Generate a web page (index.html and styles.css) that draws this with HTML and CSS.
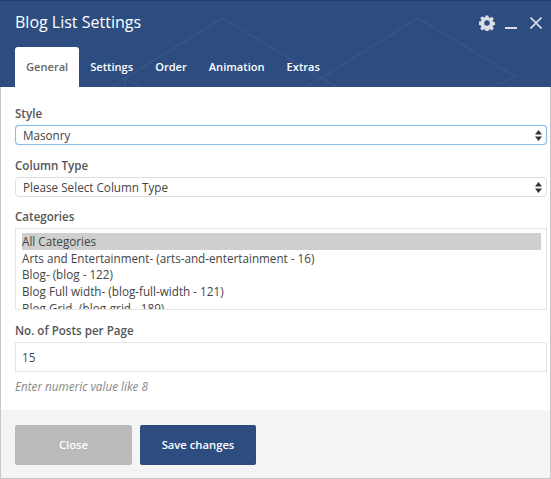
FILE: index.html
```html
<!DOCTYPE html>
<html lang="en">
<head>
<meta charset="utf-8">
<title>Blog List Settings</title>
<link rel="stylesheet" href="styles.css">
</head>
<body>
<div class="modal">
  <header class="head">
    <svg class="pattern" width="551" height="87" viewBox="0 0 551 87" fill="none" stroke="#365689" stroke-width="1.5">
      <path d="M125 78L223 18L321 78M321 78L336 87M125 78L113 87M125 78L140 87M125 78V87"/>
      <path d="M321 78L418 18L516 77L490 87M321 78L305 87"/>
    </svg>
    <div class="title-row">
      <h1 class="title">Blog List Settings</h1>
      <div class="controls">
        <svg class="gear" width="16" height="16" viewBox="0 0 16 16"><path fill="#d8dde6" fill-rule="evenodd" d="M6.6.4h2.8l.4 2.1 1.2.5 1.8-1.2 2 2-1.2 1.8.5 1.2 2.1.4v2.8l-2.1.4-.5 1.2 1.2 1.8-2 2-1.8-1.2-1.2.5-.4 2.1H6.6l-.4-2.1-1.2-.5-1.8 1.2-2-2 1.2-1.8-.5-1.2-2.1-.4V6.6l2.1-.4.5-1.2-1.2-1.8 2-2 1.8 1.2 1.2-.5zM8 5.3a2.7 2.7 0 1 0 0 5.4 2.7 2.7 0 0 0 0-5.4z"/></svg>
        <span class="minimize"></span>
        <svg class="close-x" width="12" height="12" viewBox="0 0 12 12"><path d="M.5.5L11.5 11.5M11.5.5L.5 11.5" stroke="#d8dde6" stroke-width="1.7"/></svg>
      </div>
    </div>
    <nav class="tabs">
      <a class="tab active">General</a>
      <a class="tab">Settings</a>
      <a class="tab">Order</a>
      <a class="tab">Animation</a>
      <a class="tab">Extras</a>
    </nav>
  </header>
  <main class="body">
    <label class="label">Style</label>
    <div class="select focus"><span>Masonry</span><svg class="updown" width="7" height="11" viewBox="0 0 7 11"><path fill="#333" d="M3.5 0L7 4.5H0zM3.5 11L0 6.5h7z"/></svg></div>
    <label class="label second">Column Type</label>
    <div class="select"><span>Please Select Column Type</span><svg class="updown" width="7" height="11" viewBox="0 0 7 11"><path fill="#333" d="M3.5 0L7 4.5H0zM3.5 11L0 6.5h7z"/></svg></div>
    <label class="label third">Categories</label>
    <div class="listbox">
      <div class="option selected">All Categories</div>
      <div class="option">Arts and Entertainment- (arts-and-entertainment - 16)</div>
      <div class="option">Blog- (blog - 122)</div>
      <div class="option">Blog Full width- (blog-full-width - 121)</div>
      <div class="option">Blog Grid- (blog-grid - 189)</div>
    </div>
    <label class="label fourth">No. of Posts per Page</label>
    <div class="input">15</div>
    <p class="help">Enter numeric value like 8</p>
  </main>
  <footer class="foot">
    <button class="btn btn-close">Close</button>
    <button class="btn btn-save">Save changes</button>
  </footer>
</div>
</body>
</html>
```
FILE: styles.css
```css
* { box-sizing: border-box; }
html, body { margin: 0; padding: 0; }
body {
  width: 551px;
  height: 479px;
  overflow: hidden;
  background: #fff;
  font-family: "Open Sans", sans-serif;
  color: #444;
}
.modal {
  width: 551px;
  height: 479px;
  display: flex;
  flex-direction: column;
  border: 1px solid #c8c8c8;
  border-top: 0;
}
.head {
  position: relative;
  margin: 0 -1px;
  height: 87px;
  flex: none;
  background: #2d4d80;
  border-top: 1px solid #223d68;
}
.pattern {
  position: absolute;
  left: 0;
  top: -1px;
}
.title-row {
  position: relative;
  height: 46px;
  display: flex;
  align-items: flex-start;
  justify-content: space-between;
  padding: 0 9px 0 15px;
}
.title {
  margin: 8px 0 0;
  font-size: 16px;
  line-height: 26px;
  font-weight: 400;
  color: #fff;
}
.controls {
  display: flex;
  align-items: flex-start;
  padding-top: 14px;
}
.gear { margin-right: 10px; }
.minimize {
  width: 12px;
  height: 2px;
  margin-top: 12px;
  margin-right: 13px;
  background: #d8dde6;
}
.close-x { margin-top: 2px; }
.tabs {
  position: relative;
  display: flex;
  padding-left: 15px;
  height: 40px;
}
.tab {
  height: 40px;
  padding: 0 11px;
  font-size: 11.1px;
  font-weight: 600;
  line-height: 39px;
  color: #fff;
  border-radius: 3px 3px 0 0;
}
.tab.active {
  background: #fff;
  color: #666;
}
.body {
  flex: 1;
  padding: 19px 3px 0 14px;
  min-height: 0;
}
.label {
  display: block;
  font-size: 11.6px;
  font-weight: 600;
  line-height: 16px;
  color: #555;
  margin-bottom: 3px;
}
.second { margin-top: 13px; }
.third { margin-top: 12px; }
.fourth { margin-top: 13px; }
.select {
  height: 20px;
  display: flex;
  align-items: center;
  justify-content: space-between;
  padding: 0 4px 0 7px;
  border: 1px solid #dedede;
  border-radius: 4px;
  font-size: 11.7px;
  color: #444;
  background: #fff;
}
.select.focus {
  border-color: #8dbce6;
  box-shadow: 0 0 1px #8dbce6;
}
.listbox {
  height: 82px;
  overflow: hidden;
  padding: 4px 5px 0 6px;
  border: 1px solid #e4e4e4;
  font-size: 11.7px;
  line-height: 16.7px;
  color: #444;
}
.option { height: 16.7px; white-space: nowrap; }
.option.selected { background: #cfcfcf; }
.input {
  height: 30px;
  padding: 0 6px;
  line-height: 28px;
  font-size: 11.7px;
  color: #444;
  border: 1px solid #e4e4e4;
}
.help {
  margin: 7px 0 0;
  font-size: 11.7px;
  line-height: 15px;
  font-style: italic;
  color: #888;
}
.foot {
  flex: none;
  height: 68px;
  display: flex;
  gap: 8px;
  padding: 15px 0 0 14px;
  background: #f4f4f4;
}
.btn {
  width: 117px;
  height: 40px;
  border: 0;
  padding: 0 0 2px;
  border-radius: 2px;
  font-family: "Open Sans", sans-serif;
  font-size: 11.25px;
  font-weight: 600;
  color: #fff;
}
.btn-close { background: #bababa; }
.btn-save { width: 116px; background: #2d4d80; }
```
